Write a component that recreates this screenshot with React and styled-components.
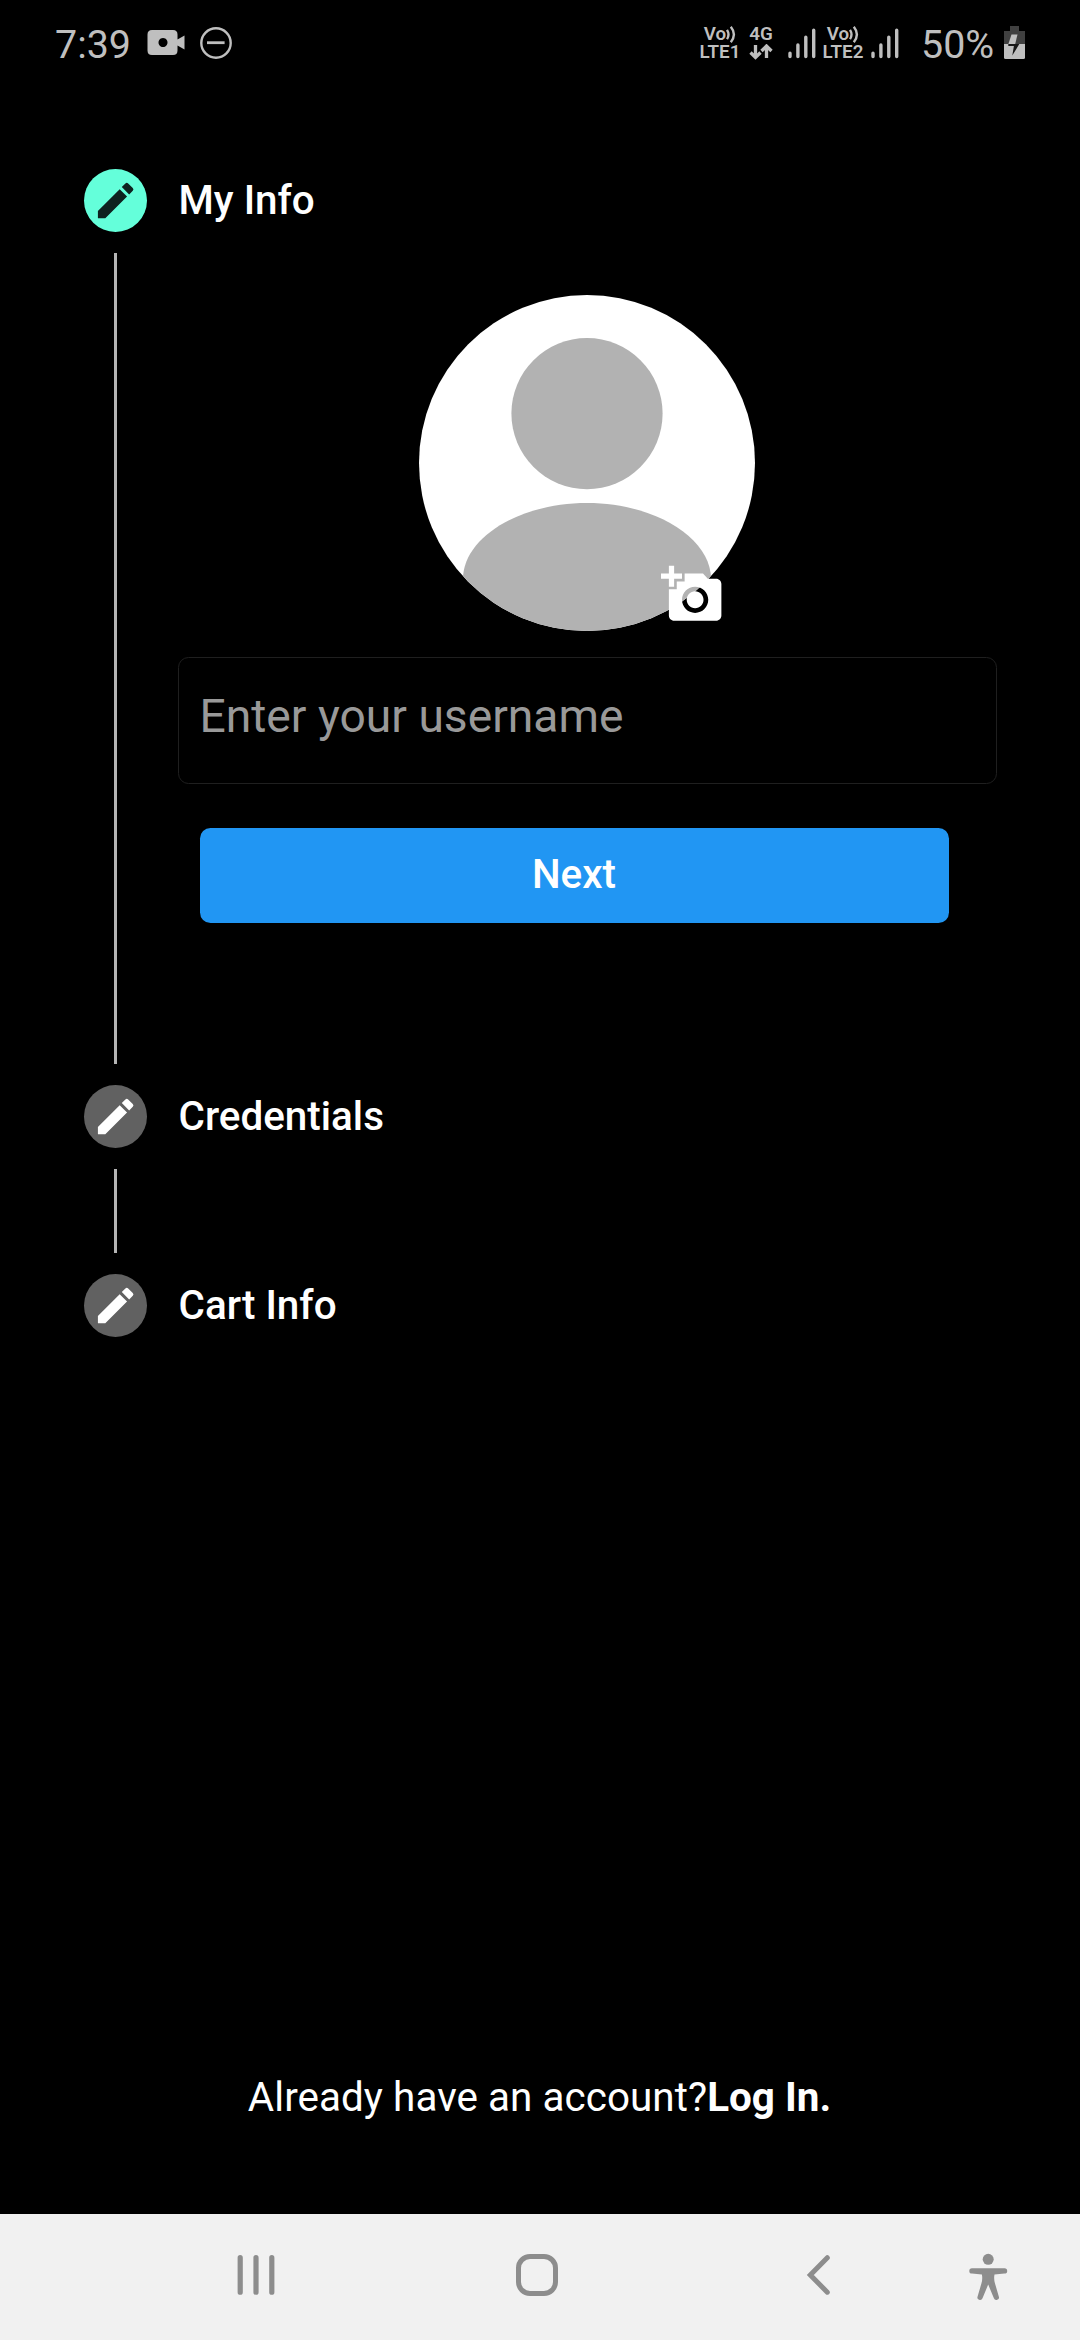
import React from "react";
import styled, { createGlobalStyle } from "styled-components";

const GREY = "#bfbfbf";
const NAV_GREY = "#8d8d8d";

const GlobalStyle = createGlobalStyle`
  *, *::before, *::after { box-sizing: border-box; }
  html, body { margin: 0; padding: 0; background: #000; }
  body { font-family: Roboto, "Noto Sans", sans-serif; }
  svg { display: block; flex: none; }
`;

const Screen = styled.div`
  width: 1080px;
  height: 2340px;
  display: flex;
  flex-direction: column;
  background: #000;
  color: #fff;
  overflow: hidden;
`;

const StatusBar = styled.header`
  height: 84px;
  flex: none;
  display: flex;
  justify-content: space-between;
  padding: 0 54px 0 55px;
  color: ${GREY};
`;

const StatusGroup = styled.div`
  display: flex;
  align-items: flex-start;
`;

const StatusText = styled.span`
  width: ${(p) => p.$width}px;
  margin-top: 21px;
  font-size: 39.4px;
  line-height: 48px;
  white-space: nowrap;
`;

const Badge = styled.div`
  width: ${(p) => p.$width}px;
  display: flex;
  flex-direction: column;
  align-items: center;
  padding-top: 25px;
  font-size: 18.8px;
  font-weight: 600;
  line-height: 18px;
  white-space: nowrap;
`;

const BadgeLine = styled.span`
  display: flex;
  align-items: center;
  height: 18px;
`;

const Spacer = styled.span`
  width: ${(p) => p.$width}px;
  flex: none;
`;

const Stepper = styled.main`
  flex: 1;
  display: flex;
  flex-direction: column;
  padding: 85px 83.5px 0 84px;
`;

const StepHeader = styled.div`
  display: flex;
  align-items: center;
  gap: 31.5px;
  height: 63px;
`;

const StepBadge = styled.span`
  width: 63px;
  height: 63px;
  flex: none;
  display: flex;
  align-items: center;
  justify-content: center;
  border-radius: 50%;
  background: ${(p) => (p.$active ? "#64ffda" : "#616161")};
  color: ${(p) => (p.$active ? "#0e221f" : "#fff")};
`;

const StepTitle = styled.h2`
  margin: 0;
  font-size: 40.425px;
  font-weight: 500;
  line-height: 63px;
`;

const StepBody = styled.div`
  display: flex;
  height: ${(p) => p.$height}px;
  padding: 21px 0;
`;

const Connector = styled.div`
  width: 3px;
  margin: 0 61px 0 30px;
  flex: none;
  background: #b5b5b5;
`;

const StepContent = styled.section`
  flex: 1;
  display: flex;
  flex-direction: column;
  padding-top: 42px;
`;

const AvatarWrap = styled.div`
  position: relative;
  width: 336px;
  height: 336px;
  margin-left: 241px;
`;

const CameraButton = styled.span`
  position: absolute;
  left: 241.5px;
  top: 267.6px;
`;

const Field = styled.input`
  display: block;
  width: 819px;
  height: 127px;
  margin-top: 26px;
  padding: 0 21px 10px 20.5px;
  border: 1px solid #1f1f1f;
  border-radius: 10.5px;
  background: transparent;
  color: #fff;
  font: 400 46.2px Roboto, sans-serif;
  outline: none;

  &::placeholder {
    color: #999;
    opacity: 1;
  }
`;

const NextButton = styled.button`
  width: 749px;
  height: 94.5px;
  margin: 44px 0 0 21.5px;
  padding: 0 0 2px;
  border: 0;
  border-radius: 10.5px;
  background: #2196f3;
  color: #fff;
  font: 500 40.425px Roboto, sans-serif;
`;

const Footer = styled.footer`
  height: 163px;
  flex: none;
  display: flex;
  justify-content: center;
  padding-right: 1px;
  font-size: 40.425px;
  line-height: 94px;
  white-space: pre;
`;

const Question = styled.span`
  letter-spacing: 0.05px;
`;

const LogIn = styled.strong`
  font-weight: 700;
`;

const NavBar = styled.nav`
  height: 126px;
  flex: none;
  display: grid;
  grid-template-columns: 281px 281px 281px 58px;
  justify-items: center;
  padding: 32px 0 0 115.5px;
  background: #f1f1f1;
  color: ${NAV_GREY};
`;

function Recorder() {
  return (
    <svg width="38" height="84" viewBox="146.500 0 38 84">
      <path
        fillRule="evenodd"
        fill={GREY}
        d="M151.500 30H172.500Q177 30 177 34.500V39.500L184 35.500V49.500L177 45.500V50.500Q177 55 172.500 55H151.500Q147 55 147 50.500V34.500Q147 30 151.500 30ZM162.500 38a4.500 4.500 0 1 0 .01 0Z"
      />
    </svg>
  );
}

function DoNotDisturb() {
  return (
    <svg width="34" height="84" viewBox="199 0 34 84" fill="none" stroke={GREY}>
      <circle cx="216" cy="43" r="14.700" strokeWidth="2.400" />
      <path d="M207 42.700h17.600" strokeWidth="2.800" />
    </svg>
  );
}

function Waves() {
  return (
    <svg width="10" height="18" viewBox="0 0 10 18" fill="none" stroke={GREY} strokeWidth="2.400">
      <path d="M1 4.800Q4 9.500 1 14.200M4.800 1.800Q11 9.500 4.800 17.200" />
    </svg>
  );
}

function DataArrows() {
  return (
    <svg width="24" height="16" viewBox="0 0 24 16" fill="none" stroke={GREY} strokeWidth="3.300">
      <path d="M6.500 1v12M1.500 8.500l5 5 5-5M17.500 14V2M12.500 7l5-5 5 5" />
    </svg>
  );
}

function Signal() {
  return (
    <svg width="28" height="84" viewBox="0 0 28 84" stroke={GREY} strokeWidth="3.400" strokeLinecap="round">
      <path d="M2 53.200V56.500M9.900 45V56.500M17.800 37.200V56.500M25.700 30.200V56.500" />
    </svg>
  );
}

function Battery() {
  return (
    <svg width="22" height="84" viewBox="1004 0 22 84">
      <path fill="#404040" d="M1010 26h9v5h6v13h-21V31h6z" />
      <path fill={GREY} d="M1004 44h21v13.500q0 1.500-1.500 1.500h-18q-1.500 0-1.500-1.500z" />
      <path fill={GREY} d="M1011.500 34.500h6l-2.300 9.500h-6.800z" />
      <path fill="#181818" d="M1008.300 44h11l-7 11.500 1.600-9.500h-5.600z" />
    </svg>
  );
}

function Pencil() {
  return (
    <svg width="47.250" height="47.250" viewBox="0 0 24 24" fill="currentColor">
      <path d="M3 17.250V21h3.750L17.810 9.940l-3.750-3.750L3 17.250zM20.710 7.040a.996.996 0 0 0 0-1.410l-2.340-2.340a.996.996 0 0 0-1.410 0l-1.830 1.830 3.750 3.750 1.830-1.830z" />
    </svg>
  );
}

function Avatar() {
  return (
    <svg width="336" height="336" viewBox="0 0 336 336">
      <defs>
        <clipPath id="disc">
          <circle cx="168" cy="168" r="168" />
        </clipPath>
      </defs>
      <circle cx="168" cy="168" r="168" fill="#fff" />
      <g clipPath="url(#disc)" fill="#b2b2b2">
        <circle cx="168" cy="118.600" r="75.600" />
        <path d="M44 284C44 243 100 208 168 208S292 243 292 284V336H44Z" />
      </g>
    </svg>
  );
}

function AddPhoto() {
  return (
    <svg width="63" height="63" viewBox="0 0 24 24" fill="#fff">
      <path d="M3 4V1h2v3h3v2H5v3H3V6H0V4h3zm3 6V7h3V4h7l1.830 2H21c1.100 0 2 .9 2 2v12c0 1.100-.9 2-2 2H5c-1.100 0-2-.9-2-2V10h3zm7 9c2.760 0 5-2.240 5-5s-2.240-5-5-5-5 2.240-5 5 2.240 5 5 5zm-3.200-5c0 1.770 1.430 3.200 3.200 3.200s3.200-1.430 3.200-3.200-1.430-3.200-3.200-3.200-3.200 1.430-3.200 3.200z" />
    </svg>
  );
}

function Recents() {
  return (
    <svg width="60" height="60" viewBox="0 0 60 60" stroke="currentColor" strokeWidth="5.200" strokeLinecap="round">
      <path d="M14.200 11.700v34.500M30 11.700v34.500M45.800 11.700v34.500" />
    </svg>
  );
}

function Home() {
  return (
    <svg width="60" height="60" viewBox="0 0 60 60" fill="none" stroke="currentColor" strokeWidth="5">
      <rect x="11.500" y="10.500" width="37" height="37" rx="11.500" />
    </svg>
  );
}

function Back() {
  return (
    <svg width="60" height="60" viewBox="0 0 60 60" fill="none" stroke="currentColor" strokeWidth="5" strokeLinecap="round">
      <path d="M39.300 11.700L22.300 29L39.300 46.200" />
    </svg>
  );
}

function Accessibility() {
  return (
    <svg width="58" height="60" viewBox="0 0 58 60" fill="currentColor">
      <circle cx="29.200" cy="13.300" r="5.500" />
      <path d="M13 22.200H45.500a2.700 2.700 0 0 1 0 5.400L35.500 28.500Q34.600 33 36 37.500L39.800 50.500a2.600 2.600 0 0 1-4.900 1.800L29.200 38.500L23.500 52.300a2.600 2.600 0 0 1-4.900-1.800L22.400 37.500Q23.800 33 22.900 28.500L13 27.600a2.700 2.700 0 0 1 0-5.400Z" />
    </svg>
  );
}

function StepHead({ title, active }) {
  return (
    <StepHeader>
      <StepBadge $active={active}>
        <Pencil />
      </StepBadge>
      <StepTitle>{title}</StepTitle>
    </StepHeader>
  );
}

function VoLte({ label }) {
  return (
    <Badge $width={40}>
      <BadgeLine>
        Vo
        <Waves />
      </BadgeLine>
      <BadgeLine>{label}</BadgeLine>
    </Badge>
  );
}

export default function App() {
  return (
    <Screen>
      <GlobalStyle />
      <StatusBar>
        <StatusGroup>
          <StatusText $width={91.5}>7:39</StatusText>
          <Recorder />
          <Spacer $width={14.5} />
          <DoNotDisturb />
        </StatusGroup>
        <StatusGroup>
          <VoLte label="LTE1" />
          <Spacer $width={9} />
          <Badge $width={24}>
            <BadgeLine>4G</BadgeLine>
            <BadgeLine>
              <DataArrows />
            </BadgeLine>
          </Badge>
          <Spacer $width={15} />
          <Signal />
          <Spacer $width={7} />
          <VoLte label="LTE2" />
          <Spacer $width={8} />
          <Signal />
          <Spacer $width={22} />
          <StatusText $width={83}>50%</StatusText>
          <Battery />
        </StatusGroup>
      </StatusBar>

      <Stepper>
        <StepHead title="My Info" active />
        <StepBody $height={853}>
          <Connector />
          <StepContent>
            <AvatarWrap>
              <Avatar />
              <CameraButton>
                <AddPhoto />
              </CameraButton>
            </AvatarWrap>
            <Field placeholder="Enter your username" />
            <NextButton type="button">Next</NextButton>
          </StepContent>
        </StepBody>
        <StepHead title="Credentials" />
        <StepBody $height={126}>
          <Connector />
        </StepBody>
        <StepHead title="Cart Info" />
      </Stepper>

      <Footer>
        <Question>Already have an account?</Question>
        <LogIn>Log In.</LogIn>
      </Footer>

      <NavBar>
        <Recents />
        <Home />
        <Back />
        <Accessibility />
      </NavBar>
    </Screen>
  );
}
